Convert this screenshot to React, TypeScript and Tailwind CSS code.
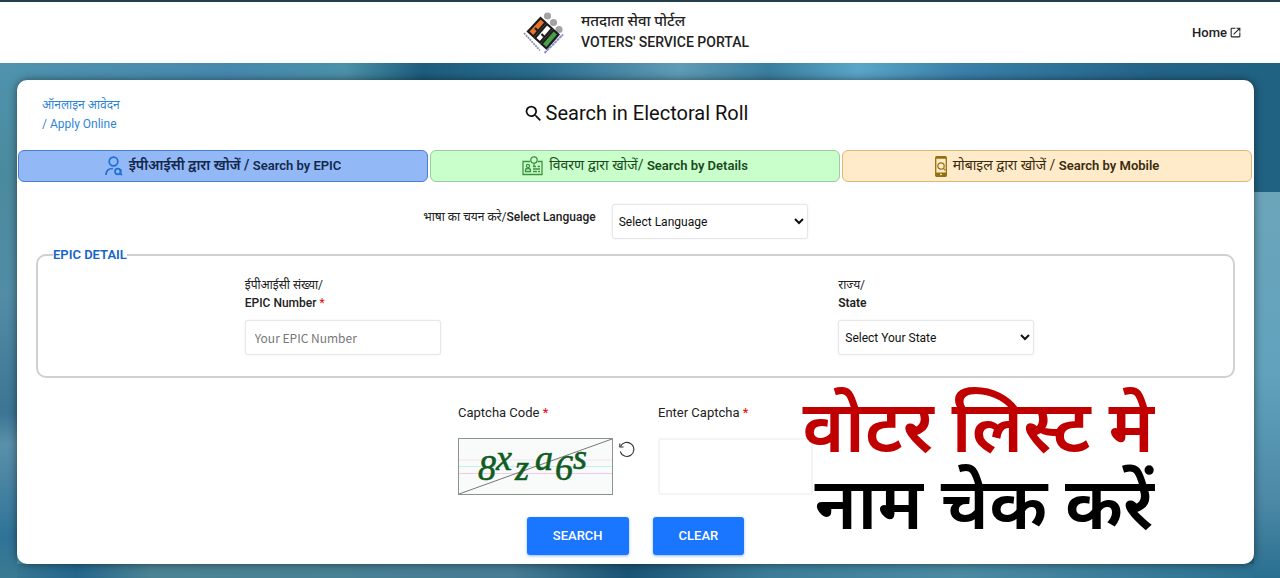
import React, { useState } from 'react';
import { MdOpenInNew, MdSearch } from 'react-icons/md';

const controlClass =
  'h-[35px] w-[196px] rounded-[3px] border border-gray-200 bg-white text-[12px] text-[#111] shadow-[0_0_2px_rgba(0,0,0,0.08)]';

const actionClass =
  'h-[38px] rounded-[3px] bg-[#1a75ff] px-[26px] text-[13px] font-medium text-white shadow-[0_1px_3px_rgba(26,117,255,0.5)]';

function PortalLogo() {
  return (
    <svg width="42" height="42" viewBox="0 0 42 42" aria-hidden="true">
      <g fill="#a3a3a3">
        <circle cx="24.500" cy="4" r="3.600" />
        <circle cx="30.500" cy="10.500" r="3.600" />
        <circle cx="36" cy="17.500" r="3.600" />
      </g>
      <g stroke="#1c1c1c" strokeWidth="2.200">
        <path d="M17.500 6l5 4.500-12 14-5.500-5z" fill="#e8742c" />
        <path d="M24 12l5 4.500-12 14-5-4.500z" fill="#fff" />
        <path d="M30.500 18l5 4.500-12 14-5-4.500z" fill="#4a9e49" />
        <path d="M12 16l2.500 2.500M18.500 22l2.500 2.500" />
      </g>
      <path d="M1 21l16 17.500" stroke="#8f93a8" strokeWidth="1.800" strokeDasharray="2 0.800" />
      <path d="M21.500 41l18.500-18.500" stroke="#8a90c4" strokeWidth="2" strokeDasharray="3 0.500" />
    </svg>
  );
}

function PersonSearchIcon() {
  return (
    <svg width="18" height="20" viewBox="0 0 18 20" fill="none" stroke="#1f6fd6" strokeWidth="1.700" aria-hidden="true">
      <circle cx="8.500" cy="5.500" r="4.300" />
      <path d="M1 19c0-4 2.500-6.500 7-6.500" />
      <circle cx="12.800" cy="15.500" r="2.800" />
      <path d="M15.600 13v4.800l1.400 1.400" />
    </svg>
  );
}

function IdCardIcon() {
  return (
    <svg width="21" height="20" viewBox="0 0 21 20" fill="none" stroke="#3f9142" strokeWidth="1.300" aria-hidden="true">
      <path d="M8 5.500H1v13h19v-13h-4" />
      <circle cx="12" cy="4" r="3.200" />
      <circle cx="6" cy="10" r="1.600" />
      <path d="M3.500 15.500v-1.500q0-1.500 2.500-1.500t2.500 1.500v1.500z" />
      <path d="M12 7.200v3M11 10.500h3M15.500 10.500h2.500M11 13h7M11 15.500h4M16 15.500h2" />
    </svg>
  );
}

function MobileSearchIcon() {
  return (
    <svg width="12" height="21" viewBox="0 0 12 21" fill="none" aria-hidden="true">
      <rect x="0.700" y="0.700" width="10.600" height="19.600" rx="1" stroke="#94700f" strokeWidth="1.300" />
      <path d="M0.700 16.500h10.600v3.800H0.700zM0.700 1h10.600v1.800H0.700z" fill="#94700f" />
      <circle cx="6" cy="10" r="3.200" stroke="#94700f" strokeWidth="1.200" />
      <path d="M8.300 12.300l2 2" stroke="#94700f" strokeWidth="1.200" />
      <circle cx="6" cy="18.300" r="0.900" fill="#ffebc8" />
    </svg>
  );
}

function CaptchaImage() {
  return (
    <svg
      viewBox="0 0 155 57"
      role="img"
      aria-label="Captcha"
      className="h-[57px] w-[155px] font-['Liberation_Serif',serif]"
    >
      <rect x="0.500" y="0.500" width="154" height="56" fill="#f8fbf9" stroke="#8b938d" />
      <path d="M1 22h153" stroke="#f5dff0" />
      <path d="M1 28.500h153" stroke="#c5eeee" />
      <path d="M1 35.500h153" stroke="#f1c9ec" />
      <path d="M1 56L154 1" stroke="#777" />
      <g fill="#0f5c1f" stroke="#0f5c1f" strokeWidth="0.600" fontStyle="italic" fontSize="36">
        <text x="20" y="42">8</text>
        <text x="38" y="32">x</text>
        <text x="57" y="42">z</text>
        <text x="77" y="32">a</text>
        <text x="97" y="42">6</text>
        <text x="115" y="31">s</text>
      </g>
    </svg>
  );
}

function RefreshIcon() {
  return (
    <svg width="16" height="17" viewBox="0 0 16 17" fill="none" stroke="#333" strokeWidth="1.100" aria-hidden="true">
      <path d="M1.500 5.500A7 7 0 1 1 1.200 10.500" />
      <path d="M0.800 2.500v3.500h3.800" />
    </svg>
  );
}

const tabs = [
  {
    id: 'epic',
    hindi: 'ईपीआईसी द्वारा खोजें /',
    label: 'Search by EPIC',
    icon: <PersonSearchIcon />,
    className: 'border-[#4a7fd0] bg-[#92b8f6] font-semibold text-[#14284d]',
  },
  {
    id: 'details',
    hindi: 'विवरण द्वारा खोजें/',
    label: 'Search by Details',
    icon: <IdCardIcon />,
    className: 'border-[#9ccb9f] bg-[#c8ffcb] text-[#1c4a20]',
  },
  {
    id: 'mobile',
    hindi: 'मोबाइल द्वारा खोजें /',
    label: 'Search by Mobile',
    icon: <MobileSearchIcon />,
    className: 'border-[#dcb878] bg-[#ffebc9] text-[#3b2b10]',
  },
];

export default function App() {
  const [activeTab, setActiveTab] = useState('epic');
  const [language, setLanguage] = useState('');
  const [state, setState] = useState('');
  const [epicNumber, setEpicNumber] = useState('');
  const [captcha, setCaptcha] = useState('');

  const clearForm = () => {
    setLanguage('');
    setState('');
    setEpicNumber('');
    setCaptcha('');
  };

  return (
    <div className="flex min-h-screen flex-col font-[Roboto,'Noto_Sans_Devanagari','Noto_Sans',sans-serif] text-[#222]">
      <header className="grid h-[63px] grid-cols-[1fr_auto_1fr] items-center border-t-2 border-[#23414d] bg-white pr-[38px]">
        <div />
        <div className="flex items-center gap-4 pl-[30px]">
          <PortalLogo />
          <div className="pb-0.5 font-medium">
            <p className="text-[15px] leading-[21px]">मतदाता सेवा पोर्टल</p>
            <p className="text-[14px] leading-[21px]">VOTERS&apos; SERVICE PORTAL</p>
          </div>
        </div>
        <a href="#" className="flex items-center gap-0.5 justify-self-end text-[13px] font-medium">
          Home
          <MdOpenInNew size={13} />
        </a>
      </header>

      {/* Blurred photo tones: left edge, right edge, bottom edge, then the top */}
      <main className="flex grow flex-col pt-[17px] pr-[26px] pb-[14px] pl-[17px] [background:linear-gradient(180deg,#4f93ad_0%,#4a8a9e_22%,#528ca6_45%,#3b7593_68%,#5a90aa_74%,#2f7398_92%,#3a7a92_100%)_left/17px_100%_no-repeat,linear-gradient(180deg,#206282_0%,#206282_25%,#6ba5ba_25%,#62a2bd_60%,#4c89a6_85%,#2a6f90_100%)_right/26px_100%_no-repeat,linear-gradient(90deg,#3a7a92_0%,#25668c_6%,#4a8494_12%,#467c94_40%,#1a5474_49%,#3c7c98_60%,#4a8aa2_75%,#2a6f90_100%)_bottom/100%_14px_no-repeat,linear-gradient(90deg,#4f93ad_0%,#4689ae_18%,#4b91a8_27%,#1c5c7d_33%,#2a6d8e_42%,#5f9cb6_53%,#3a7e9e_60%,#5aa6c8_67%,#3a80aa_75%,#236488_90%,#206282_100%)]">
        <div className="relative grow rounded-[10px] bg-white shadow-[0_0_8px_rgba(0,0,0,0.5)]">
          <div className="grid h-[70px] grid-cols-[1fr_auto_1fr] items-center px-[25px]">
            <a href="#" className="text-[12px] leading-[19px] text-[#2e86d8]">
              ऑनलाइन आवेदन
              <br />/ Apply Online
            </a>
            <h1 className="flex items-center gap-0.5 pb-1 text-[20px] text-[#111]">
              <MdSearch size={21} />
              Search in Electoral Roll
            </h1>
          </div>

          <nav className="grid grid-cols-3 gap-0.5 pr-0.5 pl-px">
            {tabs.map((tab) => (
              <button
                key={tab.id}
                type="button"
                aria-pressed={activeTab === tab.id}
                onClick={() => setActiveTab(tab.id)}
                className={`flex h-8 items-center justify-center gap-1.5 rounded-md border text-[14px] ${tab.className}`}
              >
                {tab.icon}
                <span className="pb-0.5">
                  {tab.hindi} <span className="text-[13px] font-semibold">{tab.label}</span>
                </span>
              </button>
            ))}
          </nav>

          <form onSubmit={(e) => e.preventDefault()}>
            <div className="flex justify-center gap-4 pt-[22px] pr-10">
              <label htmlFor="language" className="pt-1 text-[12px]">
                भाषा का चयन करे/<span className="font-medium">Select Language</span>
              </label>
              <select
                id="language"
                value={language}
                onChange={(e) => setLanguage(e.target.value)}
                className={`${controlClass} px-0.5`}
              >
                <option value="">Select Language</option>
                <option value="hi">Hindi</option>
                <option value="en">English</option>
              </select>
            </div>

            <fieldset className="mx-[19px] mt-2 h-[131px] rounded-[10px] border-2 border-[#d0d0d0]">
              <legend className="ml-[15px] text-[13px] leading-4 font-semibold text-[#1565c8]">
                EPIC DETAIL
              </legend>
              <div className="grid grid-cols-2 justify-items-center pt-[13px] pl-2">
                <div className="flex flex-col">
                  <label htmlFor="epic" className="text-[12px] leading-[18px]">
                    ईपीआईसी संख्या/
                    <br />
                    <span className="font-medium">EPIC Number</span> <span className="text-red-600">*</span>
                  </label>
                  <input
                    id="epic"
                    type="text"
                    placeholder="Your EPIC Number"
                    value={epicNumber}
                    onChange={(e) => setEpicNumber(e.target.value)}
                    className={`${controlClass} mt-2 px-[9px] font-['Noto_Sans_CJK_SC',sans-serif] placeholder:text-[#777]`}
                  />
                </div>
                <div className="flex flex-col">
                  <label htmlFor="state" className="text-[12px] leading-[18px]">
                    राज्य/
                    <br />
                    <span className="font-semibold">State</span>
                  </label>
                  <select
                    id="state"
                    value={state}
                    onChange={(e) => setState(e.target.value)}
                    className={`${controlClass} mt-2 px-0.5`}
                  >
                    <option value="">Select Your State</option>
                    <option value="bihar">Bihar</option>
                    <option value="up">Uttar Pradesh</option>
                  </select>
                </div>
              </div>
            </fieldset>

            <div className="flex justify-center pt-[25px]">
              <div className="w-[200px]">
                <p className="text-[13px] leading-5">
                  Captcha Code <span className="text-red-600">*</span>
                </p>
                <div className="mt-[15px] flex items-start gap-1.5">
                  <CaptchaImage />
                  <button type="button" aria-label="Refresh captcha" className="pt-[3px]">
                    <RefreshIcon />
                  </button>
                </div>
              </div>
              <div className="flex flex-col">
                <label htmlFor="captcha" className="text-[13px] leading-5">
                  Enter Captcha <span className="text-red-600">*</span>
                </label>
                <input
                  id="captcha"
                  type="text"
                  value={captcha}
                  onChange={(e) => setCaptcha(e.target.value)}
                  className="mt-[15px] h-[57px] w-[155px] rounded-[3px] border-2 border-gray-100 bg-white px-2 text-[14px]"
                />
              </div>
            </div>

            <div className="flex justify-center gap-6 pt-[22px]">
              <button type="submit" className={actionClass}>
                SEARCH
              </button>
              <button type="button" onClick={clearForm} className={actionClass}>
                CLEAR
              </button>
            </div>
          </form>

          {/* Caption laid over the form */}
          <div className="pointer-events-none absolute right-[100px] bottom-[21px] text-right text-[72px] leading-[77px] font-semibold">
            <p className="text-[#c00000]">वोटर लिस्ट मे</p>
            <p className="text-black">नाम चेक करें</p>
          </div>
        </div>
      </main>
    </div>
  );
}
